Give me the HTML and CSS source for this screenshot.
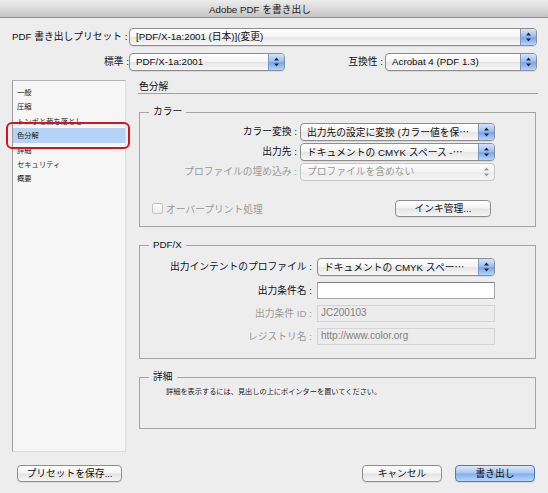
FILE: index.html
```html
<!DOCTYPE html>
<html lang="ja">
<head>
<meta charset="utf-8">
<title>Adobe PDF を書き出し</title>
<link rel="stylesheet" href="styles.css">
</head>
<body>
<div class="window">
  <div class="titlebar"><span class="title-text">Adobe PDF を書き出し</span></div>

  <div class="row preset-row">
    <span class="label preset-label">PDF 書き出しプリセット :</span>
    <div class="popup preset-popup">
      <span class="popup-text">[PDF/X-1a:2001 (日本)](変更)</span>
      <span class="popup-arrow"><svg width="7" height="10" viewBox="0 0 7 10"><path d="M3.5 0.5 L6 3.5 H1 Z M3.5 9.5 L6 6.5 H1 Z" fill="#1a2740"/></svg></span>
    </div>
  </div>

  <div class="row std-row">
    <span class="label std-label">標準 :</span>
    <div class="popup std-popup">
      <span class="popup-text">PDF/X-1a:2001</span>
      <span class="popup-arrow"><svg width="7" height="10" viewBox="0 0 7 10"><path d="M3.5 0.5 L6 3.5 H1 Z M3.5 9.5 L6 6.5 H1 Z" fill="#1a2740"/></svg></span>
    </div>
    <span class="spacer"></span>
    <span class="label compat-label">互換性 :</span>
    <div class="popup compat-popup">
      <span class="popup-text">Acrobat 4 (PDF 1.3)</span>
      <span class="popup-arrow"><svg width="7" height="10" viewBox="0 0 7 10"><path d="M3.5 0.5 L6 3.5 H1 Z M3.5 9.5 L6 6.5 H1 Z" fill="#1a2740"/></svg></span>
    </div>
  </div>

  <div class="main">
    <div class="sidebar-wrap">
      <ul class="sidebar">
        <li>一般</li>
        <li>圧縮</li>
        <li>トンボと裁ち落とし</li>
        <li class="selected">色分解</li>
        <li>詳細</li>
        <li>セキュリティ</li>
        <li>概要</li>
      </ul>
      <div class="highlight-ring"></div>
    </div>

    <div class="panel">
      <div class="panel-title">色分解</div>

      <fieldset class="group color-group">
        <legend>カラー</legend>
        <div class="form-grid color-grid">
          <span class="flabel">カラー変換 :</span>
          <div class="popup">
            <span class="popup-text">出力先の設定に変換 (カラー値を保<span class="ell">…</span></span>
            <span class="popup-arrow"><svg width="7" height="10" viewBox="0 0 7 10"><path d="M3.5 0.5 L6 3.5 H1 Z M3.5 9.5 L6 6.5 H1 Z" fill="#1a2740"/></svg></span>
          </div>
          <span class="flabel">出力先 :</span>
          <div class="popup">
            <span class="popup-text">ドキュメントの CMYK スペース -<span class="ell">…</span></span>
            <span class="popup-arrow"><svg width="7" height="10" viewBox="0 0 7 10"><path d="M3.5 0.5 L6 3.5 H1 Z M3.5 9.5 L6 6.5 H1 Z" fill="#1a2740"/></svg></span>
          </div>
          <span class="flabel disabled">プロファイルの埋め込み :</span>
          <div class="popup popup-disabled">
            <span class="popup-text">プロファイルを含めない</span>
            <span class="popup-arrow"><svg width="7" height="10" viewBox="0 0 7 10"><path d="M3.5 0.5 L6 3.5 H1 Z M3.5 9.5 L6 6.5 H1 Z" fill="#9a9a9a"/></svg></span>
          </div>
        </div>
        <div class="overprint-row">
          <label class="checkbox disabled"><span class="box"></span>オーバープリント処理</label>
          <button class="btn ink-btn">インキ管理...</button>
        </div>
      </fieldset>

      <fieldset class="group pdfx-group">
        <legend>PDF/X</legend>
        <div class="form-grid pdfx-grid">
          <span class="flabel">出力インテントのプロファイル :</span>
          <div class="popup">
            <span class="popup-text">ドキュメントの CMYK スペー<span class="ell">…</span></span>
            <span class="popup-arrow"><svg width="7" height="10" viewBox="0 0 7 10"><path d="M3.5 0.5 L6 3.5 H1 Z M3.5 9.5 L6 6.5 H1 Z" fill="#1a2740"/></svg></span>
          </div>
          <span class="flabel">出力条件名 :</span>
          <div class="field"></div>
          <span class="flabel disabled">出力条件 ID :</span>
          <div class="field field-disabled">JC200103</div>
          <span class="flabel disabled">レジストリ名 :</span>
          <div class="field field-disabled">http://www.color.org</div>
        </div>
      </fieldset>

      <fieldset class="group detail-group">
        <legend>詳細</legend>
        <p class="detail-text">詳細を表示するには、見出しの上にポインターを置いてください。</p>
      </fieldset>
    </div>
  </div>

  <div class="footer">
    <button class="btn save-btn">プリセットを保存...</button>
    <span class="spacer"></span>
    <button class="btn cancel-btn">キャンセル</button>
    <button class="btn btn-default export-btn">書き出し</button>
  </div>
</div>
</body>
</html>
```

FILE: styles.css
```css
* { box-sizing: border-box; }

html, body {
  margin: 0;
  padding: 0;
  background: #ededed;
}

body {
  font-family: "Liberation Sans", "Noto Sans CJK JP", sans-serif;
  font-size: 9.75px;
  color: #111;
}

.window {
  width: 548px;
  height: 493px;
  display: flex;
  flex-direction: column;
  background: #ededed;
  overflow: hidden;
}

.titlebar {
  height: 18px;
  flex: none;
  display: flex;
  align-items: center;
  justify-content: center;
  padding-right: 28px;
  background: linear-gradient(#ececec, #d6d6d6 60%, #c4c4c4);
  border-bottom: 1px solid #8c8c8c;
  font-size: 9.75px;
  color: #222;
}

.row {
  display: flex;
  align-items: center;
  flex: none;
}

.preset-row {
  margin-top: 10px;
  padding-left: 12px;
  padding-right: 11px;
}

.std-row {
  margin-top: 7px;
  padding-left: 12px;
  padding-right: 11px;
}

.label {
  white-space: nowrap;
  line-height: 18px;
}

.preset-label { width: 117px; }
.std-label { width: 117px; text-align: right; }
.compat-label { margin-right: 2px; }

.spacer { flex: 1; }

.ell {
  font-family: "Noto Sans CJK JP", sans-serif;
}

/* Aqua popup button */
.popup {
  display: flex;
  height: 18px;
  border: 1px solid #8d8d8d;
  border-radius: 4px;
  background: linear-gradient(#ffffff, #f4f4f4 48%, #e6e6e6 52%, #f7f7f7);
  overflow: hidden;
  box-shadow: 0 1px 0 rgba(0,0,0,0.08);
}

.popup-text {
  flex: 1;
  min-width: 0;
  padding-left: 6px;
  line-height: 16px;
  white-space: nowrap;
  overflow: hidden;
}

.popup-arrow {
  flex: none;
  width: 16px;
  display: flex;
  align-items: center;
  justify-content: center;
  border-left: 1px solid #7b96c8;
  background: linear-gradient(#d3e4fb, #9fc0f0 45%, #78a6ea 55%, #b8d3f7);
}

.preset-popup { flex: 1; }
.std-popup { width: 156px; }
.compat-popup { width: 152px; }

.popup-disabled {
  border-color: #c6c6c6;
  background: linear-gradient(#fbfbfb, #f3f3f3 50%, #ececec 51%, #f4f4f4);
  box-shadow: none;
  color: #9a9a9a;
}

.popup-disabled .popup-arrow {
  background: transparent;
  border-left: 1px solid transparent;
}

/* main */
.main {
  flex: none;
  display: flex;
  margin-top: 9px;
  height: 372px;
}

.sidebar-wrap {
  position: relative;
  margin-left: 12px;
  width: 114px;
  height: 372px;
}

.sidebar {
  list-style: none;
  margin: 0;
  padding: 4px 0 0;
  height: 100%;
  background: #f6f6f6;
  border: 1px solid #dcdcdc;
  border-left-color: #9c9c9c;
  border-top-color: #b4b4b4;
  font-family: "Noto Sans CJK JP", "Liberation Sans", sans-serif;
  font-size: 7.3px;
}

.sidebar li {
  height: 14.4px;
  line-height: 14.4px;
  padding-left: 4px;
  white-space: nowrap;
  color: #1a1a1a;
}

.sidebar li.selected {
  background: #b5d3f7;
}

.highlight-ring {
  position: absolute;
  left: -6px;
  top: 42px;
  width: 124px;
  height: 27px;
  border: 2px solid #d01622;
  border-radius: 6px;
}

.panel {
  margin-left: 12px;
  width: 400px;
  display: flex;
  flex-direction: column;
}

.panel-title {
  height: 14px;
  line-height: 13px;
  border-bottom: 1px solid #a2a2a2;
  padding-left: 1px;
}

.group {
  margin: 0 2px 0 1px;
  padding: 0;
  border: 1px solid #a4a4a4;
  min-width: 0;
}

.group legend {
  margin-left: 9px;
  padding: 0 4px;
  line-height: 12px;
  font-size: 9.75px;
}

.color-group {
  margin-top: 12px;
  height: 121px;
}

.form-grid {
  display: grid;
  align-items: center;
}

.color-grid {
  grid-template-columns: 1fr 195px;
  column-gap: 3px;
  row-gap: 2px;
  padding: 5px 40px 0 0;
  grid-auto-rows: 18px;
}

.flabel {
  text-align: right;
  white-space: nowrap;
  line-height: 18px;
}

.flabel.disabled { color: #9a9a9a; }

.overprint-row {
  display: flex;
  align-items: center;
  margin-top: 19px;
  padding-left: 12px;
  padding-right: 44px;
}

.checkbox {
  display: flex;
  align-items: center;
  flex: 1;
  color: #9a9a9a;
}

.checkbox .box {
  width: 11px;
  height: 11px;
  margin-right: 3px;
  border: 1px solid #c2c2c2;
  border-radius: 2px;
  background: linear-gradient(#fdfdfd, #ececec);
}

.btn {
  font: inherit;
  color: #111;
  height: 17px;
  padding: 0;
  border: 1px solid #8e8e8e;
  border-radius: 4px;
  background: linear-gradient(#ffffff, #f2f2f2 48%, #e3e3e3 52%, #f5f5f5);
  box-shadow: 0 1px 0 rgba(0,0,0,0.08);
  line-height: 15px;
  white-space: nowrap;
}

.ink-btn { width: 96px; }

.btn-default {
  border-color: #5a78ad;
  background: linear-gradient(#dbe9fb, #a6c7f2 48%, #80aded 52%, #bcd6f8);
}

.pdfx-group {
  margin-top: 12px;
  height: 120px;
}

.pdfx-grid {
  grid-template-columns: 1fr 178px;
  column-gap: 5px;
  grid-template-rows: 18px 17px 17px 17px;
  row-gap: 6px;
  padding: 7px 40px 0 0;
}

.field {
  height: 17px;
  background: #ffffff;
  border: 1px solid #a6a6a6;
  border-top-color: #7e7e7e;
  padding-left: 3px;
  line-height: 14px;
  font-size: 10px;
  white-space: nowrap;
}

.field-disabled {
  background: #ececec;
  border-color: #d4d4d4;
  color: #808080;
}

.detail-group {
  margin-top: 12px;
  height: 58px;
}

.detail-text {
  margin: 3px 0 0 26px;
  font-family: "Noto Sans CJK JP", sans-serif;
  font-size: 7.2px;
  line-height: 10px;
  color: #222;
}

.footer {
  flex: none;
  display: flex;
  align-items: center;
  margin-top: 13px;
  padding-left: 17px;
  padding-right: 13px;
  gap: 13px;
}

.save-btn { width: 105px; }
.cancel-btn { width: 80px; }
.export-btn { width: 80px; }
```
